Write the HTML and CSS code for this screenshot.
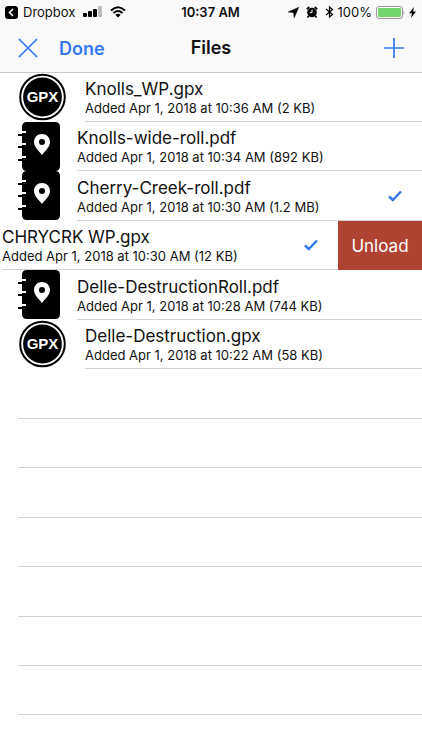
FILE: index.html
```html
<!DOCTYPE html>
<html lang="en">
<head>
<meta charset="utf-8">
<meta name="viewport" content="width=device-width, initial-scale=1">
<title>Files</title>
<link rel="stylesheet" href="styles.css">
</head>
<body>
<svg width="0" height="0" class="defs" aria-hidden="true">
  <symbol id="book" viewBox="0 0 42 49">
    <path d="M9 0H37Q42 0 42 5V44Q42 49 37 49H9Q4 49 4 44V39H0V37H4V36H8V34H4V26H0V24H4V23H8V21H4V14H0V12H4V11H8V9H4V5Q4 0 9 0Z"/>
    <path fill="#fff" fill-rule="evenodd" d="M24 12C19.500 12 16 15.400 16 20C16 25 20.500 28.500 24 33C27.500 28.500 32 25 32 20C32 15.400 28.500 12 24 12ZM24 17A3 3 0 1 1 24 23A3 3 0 1 1 24 17Z"/>
  </symbol>
  <symbol id="check" viewBox="0 0 14 12">
    <path d="M1 6.500L4.800 10L13 1.500" fill="none" stroke="#3478f0" stroke-width="2.400"/>
  </symbol>
</svg>
<header class="top">
  <div class="status">
    <div class="status-left">
      <svg width="13" height="13" viewBox="0 0 13 13"><rect width="13" height="13" rx="3"/><path d="M8 3L4.500 6.500L8 10" fill="none" stroke="#fff" stroke-width="1.600"/></svg>
      <span>Dropbox</span>
      <svg class="signal" width="19" height="12" viewBox="0 0 19 12"><rect y="7" width="4" height="4" rx="1"/><rect x="5" y="5" width="4" height="6" rx="1"/><rect x="10" y="3" width="4" height="8" rx="1"/><rect x="15" y="0" width="4" height="11" rx="1" fill="#bbb"/></svg>
      <svg width="16" height="12" viewBox="0 0 16 12"><path d="M1 4.500Q8 -2 15 4.500M3.500 7Q8 3 12.500 7" fill="none" stroke="#000" stroke-width="2"/><path d="M8 11.500L5.300 8.800Q8 6.800 10.700 8.800Z"/></svg>
    </div>
    <div class="time">10:37 AM</div>
    <div class="status-right">
      <svg width="11" height="11" viewBox="0 0 11 11"><path d="M10.800 .200L6.200 10.800L5.500 5.500L.200 5Z" stroke="#000" stroke-width=".500"/></svg>
      <svg class="alarm" width="12" height="12" viewBox="0 0 12 12"><circle cx="6" cy="6.500" r="4.800"/><path d="M.800 3.200L3.200 1M11.200 3.200L8.800 1M2.500 10L1.500 11.500M9.500 10L10.500 11.500" stroke="#000" stroke-width="1.700"/><path d="M6 3.500V6.700H3.800" fill="none" stroke="#fff"/></svg>
      <svg width="9" height="12" viewBox="0 0 9 12"><path d="M1 3L7.500 8.500L4.500 11V1L7.500 3.500L1 9" fill="none" stroke="#000" stroke-width="1.200"/></svg>
      <span>100%</span>
      <svg width="29" height="13" viewBox="0 0 29 13"><rect x=".500" y=".500" width="26" height="12" rx="2.500" fill="#fff" stroke="#999"/><rect x="2" y="2" width="23" height="9" rx="1" fill="#72d66d"/><path d="M27.500 4.500Q29 6.500 27.500 8.500Z" fill="#888"/></svg>
      <svg width="7" height="11" viewBox="0 0 7 11"><path d="M5 0L0 6.200H3L2 11L7 4.500H4Z"/></svg>
    </div>
  </div>
  <nav class="bar">
    <div class="bar-left">
      <button class="icon-button" aria-label="Close"><svg width="20" height="20" viewBox="0 0 20 20"><path d="M1 1L19 19M19 1L1 19" stroke="#3478f0" stroke-width="1.700"/></svg></button>
      <button class="done">Done</button>
    </div>
    <h1>Files</h1>
    <button class="icon-button add" aria-label="Add"><svg width="20" height="20" viewBox="0 0 20 20"><path d="M10 0V20M0 10H20" stroke="#3478f0" stroke-width="1.700"/></svg></button>
  </nav>
</header>
<main>
  <ul class="files">
    <li class="row"><svg class="gpx" viewBox="0 0 48 48"><circle cx="24.500" cy="24" r="22.300" fill="#fff" stroke="#000" stroke-width="2"/><circle cx="24.500" cy="24" r="19.400"/><text x="24.500" y="29" text-anchor="middle" class="gpx-label">GPX</text></svg><div class="cell"><div class="info"><h2>Knolls_WP.gpx</h2><p>Added Apr 1, 2018 at 10:36 AM (2 KB)</p></div></div></li>
    <li class="row"><svg class="book"><use href="#book"/></svg><div class="cell"><div class="info"><h2>Knolls-wide-roll.pdf</h2><p>Added Apr 1, 2018 at 10:34 AM (892 KB)</p></div></div></li>
    <li class="row"><svg class="book"><use href="#book"/></svg><div class="cell"><div class="info"><h2>Cherry-Creek-roll.pdf</h2><p>Added Apr 1, 2018 at 10:30 AM (1.2 MB)</p></div><svg class="check"><use href="#check"/></svg></div></li>
    <li class="row swiped"><div class="cell"><div class="info"><h2>CHRYCRK WP.gpx</h2><p>Added Apr 1, 2018 at 10:30 AM (12 KB)</p></div><svg class="check"><use href="#check"/></svg></div><button class="unload">Unload</button></li>
    <li class="row"><svg class="book"><use href="#book"/></svg><div class="cell"><div class="info"><h2>Delle-DestructionRoll.pdf</h2><p>Added Apr 1, 2018 at 10:28 AM (744 KB)</p></div></div></li>
    <li class="row"><svg class="gpx" viewBox="0 0 48 48"><circle cx="24.500" cy="24" r="22.300" fill="#fff" stroke="#000" stroke-width="2"/><circle cx="24.500" cy="24" r="19.400"/><text x="24.500" y="29" text-anchor="middle" class="gpx-label">GPX</text></svg><div class="cell"><div class="info"><h2>Delle-Destruction.gpx</h2><p>Added Apr 1, 2018 at 10:22 AM (58 KB)</p></div></div></li>
    <li class="row"><div class="cell"></div></li>
    <li class="row"><div class="cell"></div></li>
    <li class="row"><div class="cell"></div></li>
    <li class="row"><div class="cell"></div></li>
    <li class="row"><div class="cell"></div></li>
    <li class="row"><div class="cell"></div></li>
    <li class="row"><div class="cell"></div></li>
  </ul>
</main>
</body>
</html>
```
FILE: styles.css
```css
* { box-sizing: border-box; }
body { margin: 0; background: #fff; color: #111; font-family: Inter, "Liberation Sans", sans-serif; }
h1, h2, p, ul { margin: 0; padding: 0; }
button { border: 0; padding: 0; background: none; font-family: inherit; cursor: pointer; }
svg { display: block; flex: none; }
.defs { position: absolute; }
.top { background: #f9f9f9; border-bottom: 1px solid #c8c8c8; }
.status { display: grid; grid-template-columns: 1fr auto 1fr; align-items: center; height: 24px; padding: 0 6px 0 5px; font-size: 13px; }
.status-left, .status-right { display: flex; align-items: center; gap: 5px; }
.status-right { justify-content: flex-end; gap: 4px; }
.signal { margin: 0 3px; }
.alarm { margin: 0 3px; }
.time { font-weight: 600; }
.bar { display: grid; grid-template-columns: 1fr auto 1fr; align-items: center; height: 48px; padding: 0 18px; }
.bar-left { display: flex; align-items: center; gap: 21px; }
.done { color: #3478f0; font-size: 18px; font-weight: 600; }
.add { justify-self: end; }
h1 { font-size: 18px; font-weight: 600; line-height: 24px; }
.files { list-style: none; }
.row { display: flex; height: 49px; padding-left: 18px; }
.row:nth-child(odd) { height: 50px; }
.row:first-child, .row:nth-child(n+12) { height: 49px; }
.gpx { width: 48px; height: 48px; margin-right: 19px; }
.book { width: 42px; height: 49px; margin-right: 17px; }
.gpx-label { fill: #fff; font-family: "Liberation Sans", sans-serif; font-size: 15px; font-weight: 700; }
.cell { flex: 1; display: flex; align-items: center; justify-content: space-between; padding-right: 20px; border-bottom: 1px solid #d4d4d4; }
.info { padding-top: 1px; }
h2 { font-size: 17px; font-weight: 400; line-height: 21px; }
p { font-size: 13px; line-height: 16px; }
.check { width: 14px; height: 12px; }
.swiped { padding-left: 2px; }
.unload { width: 84px; background: #b04232; color: #fff; font-size: 17px; }
```
